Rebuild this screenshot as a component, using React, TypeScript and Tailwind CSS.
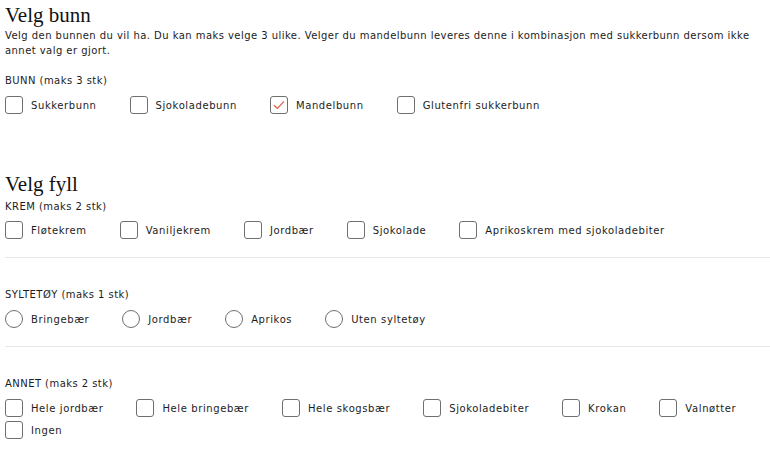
import { useState } from "react";

const bunn = ["Sukkerbunn", "Sjokoladebunn", "Mandelbunn", "Glutenfri sukkerbunn"];
const krem = ["Fløtekrem", "Vaniljekrem", "Jordbær", "Sjokolade", "Aprikoskrem med sjokoladebiter"];
const syltetoy = ["Bringebær", "Jordbær", "Aprikos", "Uten syltetøy"];
const annet = ["Hele jordbær", "Hele bringebær", "Hele skogsbær", "Sjokoladebiter", "Krokan", "Valnøtter", "Ingen"];

const Box = ({ label, checked, onClick }: { label: string; checked: boolean; onClick: () => void }) => (
  <label className="flex items-center gap-2 cursor-pointer" onClick={onClick}>
    <span className="w-[18px] h-[18px] rounded-[3px] border border-[#6f6f6f] bg-white flex items-center justify-center">
      {checked && (
        <svg width="12" height="10" viewBox="0 0 12 10" fill="none">
          <path d="M1 5.2 L4.4 8.4 L11 1.4" stroke="#e4604c" strokeWidth="1.3" />
        </svg>
      )}
    </span>
    <span>{label}</span>
  </label>
);

const Radio = ({ label, checked, onClick }: { label: string; checked: boolean; onClick: () => void }) => (
  <label className="flex items-center gap-2 cursor-pointer" onClick={onClick}>
    <span className="w-[18px] h-[18px] rounded-full border border-[#6f6f6f] bg-white flex items-center justify-center">
      {checked && <span className="w-[8px] h-[8px] rounded-full bg-[#e4604c]" />}
    </span>
    <span>{label}</span>
  </label>
);

const App = () => {
  const [valgt, setValgt] = useState<string[]>(["bunn:Mandelbunn"]);
  const [sylt, setSylt] = useState<string>("");

  const toggle = (key: string) =>
    setValgt((v) => (v.includes(key) ? v.filter((k) => k !== key) : [...v, key]));

  const heading = "font-['Liberation_Serif',serif] text-[21px] leading-[26px] pt-[2px] text-[#111] tracking-normal";
  const sub = "leading-[15px]";
  const row = "flex flex-wrap gap-x-[33px] gap-y-[4px] leading-[15px] tracking-[0.6px]";

  return (
    <div className="bg-white min-h-[457px] w-[770px] pl-[5px] text-[10px] tracking-[0.45px] text-[#1c1c1c] font-['DejaVu_Sans',sans-serif]">
      <h2 className={heading}>Velg bunn</h2>
      <p className="leading-[15px] pr-[10px]">
        Velg den bunnen du vil ha. Du kan maks velge 3 ulike. Velger du mandelbunn leveres denne i kombinasjon med sukkerbunn dersom ikke annet valg er gjort.
      </p>
      <div className={`mt-[15px] ${sub}`}>BUNN (maks 3 stk)</div>
      <div className={`mt-[8px] ${row}`}>
        {bunn.map((b) => (
          <Box key={b} label={b} checked={valgt.includes("bunn:" + b)} onClick={() => toggle("bunn:" + b)} />
        ))}
      </div>

      <h2 className={`${heading} mt-[55px]`}>Velg fyll</h2>
      <div className={`mt-[2px] ${sub}`}>KREM (maks 2 stk)</div>
      <div className={`mt-[7px] ${row}`}>
        {krem.map((k) => (
          <Box key={k} label={k} checked={valgt.includes("krem:" + k)} onClick={() => toggle("krem:" + k)} />
        ))}
      </div>
      <div className="mt-[18px] border-t border-[#e6e6e6]" />

      <div className={`mt-[29px] ${sub}`}>SYLTETØY (maks 1 stk)</div>
      <div className={`mt-[8px] ${row}`}>
        {syltetoy.map((s) => (
          <Radio key={s} label={s} checked={sylt === s} onClick={() => setSylt(s)} />
        ))}
      </div>
      <div className="mt-[18px] border-t border-[#e6e6e6]" />

      <div className={`mt-[29px] ${sub}`}>ANNET (maks 2 stk)</div>
      <div className={`mt-[8px] ${row}`}>
        {annet.map((a) => (
          <Box key={a} label={a} checked={valgt.includes("annet:" + a)} onClick={() => toggle("annet:" + a)} />
        ))}
      </div>
    </div>
  );
};

export default App;
